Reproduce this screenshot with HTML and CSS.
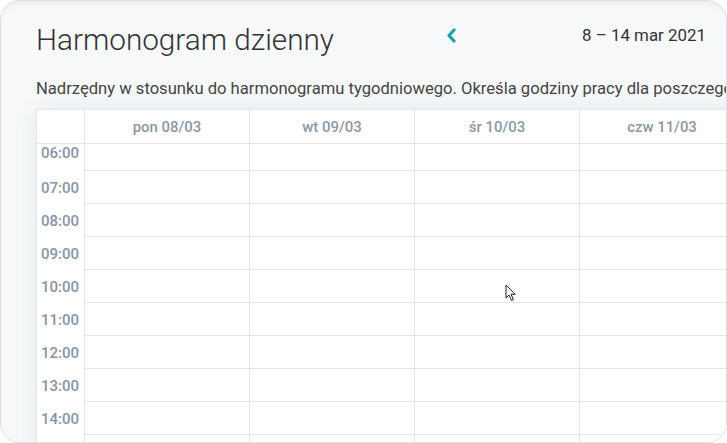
FILE: index.html
```html
<!DOCTYPE html>
<html lang="pl">
<head>
<meta charset="utf-8">
<title>Harmonogram dzienny</title>
<link rel="stylesheet" href="styles.css">
</head>
<body>
<div class="card">
  <header class="top">
    <h1 class="title">Harmonogram dzienny</h1>
    <button class="prev" aria-label="Poprzedni tydzień">
      <svg width="10" height="15" viewBox="0 0 10 15"><path d="M8 2 L3 7.5 L8 13" fill="none" stroke="#12a5ae" stroke-width="3.2" stroke-linecap="round" stroke-linejoin="round"/></svg>
    </button>
    <div class="range">8 – 14 mar 2021</div>
  </header>
  <p class="desc">Nadrzędny w stosunku do harmonogramu tygodniowego. Określa godziny pracy dla poszczególnych dni.</p>
  <div class="grid">
    <div class="h corner"></div>
    <div class="h">pon 08/03</div>
    <div class="h">wt 09/03</div>
    <div class="h">śr 10/03</div>
    <div class="h">czw 11/03</div>
    <div class="h">pt 12/03</div>
    <div class="h">sob 13/03</div>
    <div class="h">nd 14/03</div>

    <div class="t first">06:00</div><div class="c first"></div><div class="c first"></div><div class="c first"></div><div class="c first"></div><div class="c first"></div><div class="c first"></div><div class="c first"></div>
    <div class="t">07:00</div><div class="c"></div><div class="c"></div><div class="c"></div><div class="c"></div><div class="c"></div><div class="c"></div><div class="c"></div>
    <div class="t">08:00</div><div class="c"></div><div class="c"></div><div class="c"></div><div class="c"></div><div class="c"></div><div class="c"></div><div class="c"></div>
    <div class="t">09:00</div><div class="c"></div><div class="c"></div><div class="c"></div><div class="c"></div><div class="c"></div><div class="c"></div><div class="c"></div>
    <div class="t">10:00</div><div class="c"></div><div class="c"></div><div class="c"></div><div class="c"></div><div class="c"></div><div class="c"></div><div class="c"></div>
    <div class="t">11:00</div><div class="c"></div><div class="c"></div><div class="c"></div><div class="c"></div><div class="c"></div><div class="c"></div><div class="c"></div>
    <div class="t">12:00</div><div class="c"></div><div class="c"></div><div class="c"></div><div class="c"></div><div class="c"></div><div class="c"></div><div class="c"></div>
    <div class="t">13:00</div><div class="c"></div><div class="c"></div><div class="c"></div><div class="c"></div><div class="c"></div><div class="c"></div><div class="c"></div>
    <div class="t">14:00</div><div class="c"></div><div class="c"></div><div class="c"></div><div class="c"></div><div class="c"></div><div class="c"></div><div class="c"></div>
    <div class="t">15:00</div><div class="c"></div><div class="c"></div><div class="c"></div><div class="c"></div><div class="c"></div><div class="c"></div><div class="c"></div>
  </div>
  <svg class="cursor" width="12" height="18" viewBox="0 0 12 18"><path d="M1 1 L1 14 L4 11 L6.5 16.5 L8.5 15.6 L6 10.3 L10.2 10.3 Z" fill="#fff" stroke="#222" stroke-width="1" stroke-linejoin="round"/></svg>
</div>
</body>
</html>
```
FILE: styles.css
```css
* { box-sizing: border-box; }
html, body { margin: 0; padding: 0; background: #fff; }
body { font-family: Roboto, "Noto Sans", sans-serif; }

.card {
  position: relative;
  width: 727px;
  height: 443px;
  border: 1px solid #dcdee0;
  border-radius: 20px;
  background: #f7f9fa;
  overflow: hidden;
  padding: 0 0 0 35px;
  box-shadow: inset 0 7px 9px -7px rgba(0,0,0,0.10);
}

.top {
  display: flex;
  align-items: flex-start;
  padding-top: 22px;
  padding-right: 20px;
  height: 56px;
}
.title {
  margin: 0;
  font-weight: 300;
  font-size: 29.7px;
  line-height: 34px;
  color: #333;
  flex: 1;
}
.prev {
  border: 0;
  background: none;
  padding: 0;
  margin: 5px 126px 0 0;
  width: 10px;
  height: 15px;
  display: block;
}
.prev svg { display: block; }
.range {
  font-size: 16.9px;
  line-height: 20px;
  margin-top: 2px;
  color: #333;
}

.desc {
  margin: 22px 0 0 0;
  font-size: 16.6px;
  line-height: 20px;
  color: #444;
  white-space: nowrap;
  height: 30px;
}

.grid {
  display: grid;
  grid-template-columns: 48px repeat(7, 165px);
  grid-template-rows: 34px 27px;
  grid-auto-rows: 33px;
  width: max-content;
  background: #fff;
  border-top: 1px solid #e3e5e7;
  border-left: 1px solid #e3e5e7;
  box-shadow: 0 0 24px rgba(30,50,70,0.08);
}
.h {
  border-right: 1px solid #e3e5e7;
  border-bottom: 1px solid #e3e5e7;
  display: flex;
  align-items: center;
  justify-content: center;
  font-size: 14.9px;
  font-weight: 500;
  color: #8b98a6;
}
.c {
  border-right: 1px solid #e3e5e7;
  border-bottom: 1px solid #e3e5e7;
}
.t {
  border-right: 1px solid #e3e5e7;
  display: flex;
  align-items: center;
  justify-content: flex-end;
  padding-right: 5px;
  font-size: 15px;
  font-weight: 500;
  color: #8795a4;
}
.t.first { padding-bottom: 9px; }

.cursor {
  position: absolute;
  left: 504px;
  top: 283px;
}
```
